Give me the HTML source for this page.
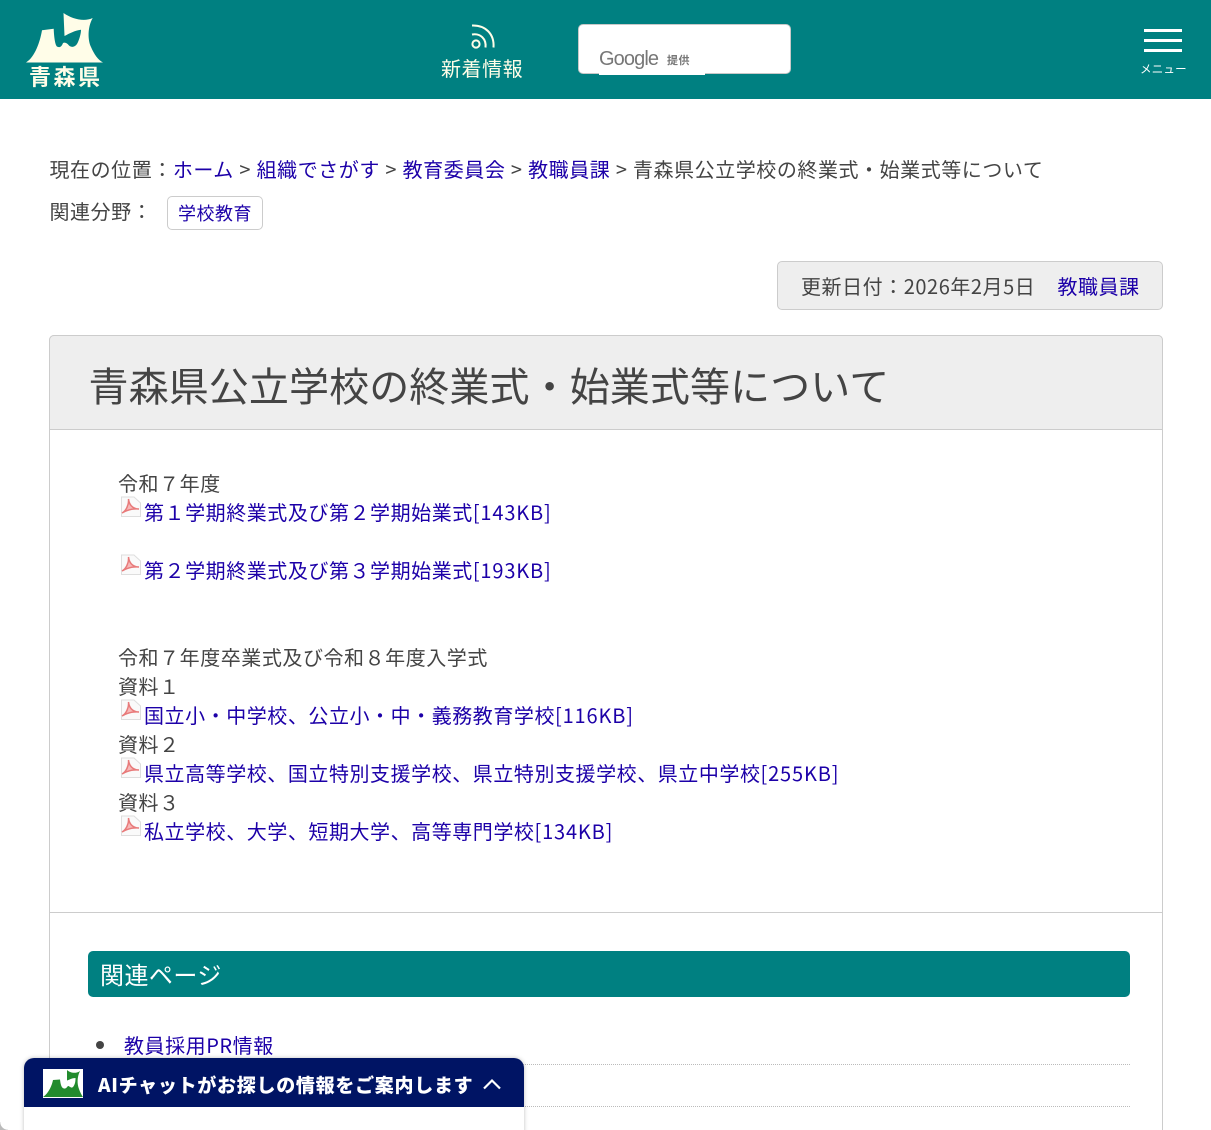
<!DOCTYPE html>
<html lang="ja"><head><meta charset="utf-8"><title>青森県公立学校の終業式・始業式等について</title>
<style>
html,body{margin:0;padding:0;background:#fff;width:1211px;height:1130px;overflow:hidden}
#w{width:1211px;height:1130px;position:relative;overflow:hidden;font-family:"Noto Sans CJK JP",sans-serif;color:#444}
.t{position:absolute;white-space:nowrap;font-size:20px;letter-spacing:.55px;line-height:30px;height:30px}
.k{letter-spacing:.85px}
a{color:#1c00a8;text-decoration:none}
.b{position:absolute;box-sizing:border-box}
svg{position:absolute;display:block}
</style></head><body><div id="w">
<div class="b" style="left:0;top:0;width:1211px;height:99px;background:#008081"></div>
<svg style="left:0;top:0" width="120" height="66" viewBox="0 0 120 66"><path fill="#fffde8" d="M26 62.5C35 57 40 42 42 30.300L53.700 28.700C54 36 55 46 57.500 46.800C60 48 62 46 63 43C65 42 67 43 69 45.500C72 48 76 47 78 42C80 37 81 33 81 29.700C75 30.500 70 33 64.500 36L63.500 13C72 19 84 22 92.700 18C87 28 88 41 91 47C94 54 98 60 103 62.500Z"/></svg>
<div class="t" style="left:29px;top:61px;font-size:22px;letter-spacing:2.500px;font-weight:700;color:#fffde8">青森県</div>
<svg style="left:468px;top:22px" width="30" height="30" viewBox="0 0 30 30" fill="none" stroke="#fffde8" stroke-width="2"><circle cx="8" cy="22" r="3.6"/><path d="M4 12.5C12.5 11 18.5 17 17.5 25.5"/><path d="M4 3.5C17.5 3 26.5 12 25.5 25.5"/></svg>
<div class="t" style="left:441px;top:53px;color:#fffde8">新着情報</div>
<div class="b" style="left:578px;top:24px;width:213px;height:50px;background:#fff;border:1px solid #c8c8c8;border-radius:5px"></div>
<div class="b" style="left:599px;top:70px;width:106px;height:5px;background:#fff"></div>
<div class="t" style="left:599px;top:44px;font-family:'Liberation Sans',sans-serif;font-size:20px;letter-spacing:-.9px;color:#777">Google</div>
<div class="t" style="left:667px;top:45px;font-size:11px;letter-spacing:.5px;font-weight:700;color:#777">提供</div>
<div class="b" style="left:1144px;top:29px;width:38px;height:3px;background:#fff"></div>
<div class="b" style="left:1144px;top:39px;width:38px;height:3px;background:#fff"></div>
<div class="b" style="left:1144px;top:49px;width:38px;height:3px;background:#fff"></div>
<div class="t" style="left:1140px;top:54px;font-size:11.5px;letter-spacing:.2px;color:#fff">メニュー</div>

<div class="t" style="left:49.500px;top:154px;word-spacing:.5px">現在の位置：<a>ホーム</a> &gt; <a>組織でさがす</a> &gt; <a>教育委員会</a> &gt; <a>教職員課</a> &gt; 青森県公立学校の終業式・始業式等について</div>
<div class="t" style="left:49.500px;top:196px">関連分野：</div>
<div class="b" style="left:167px;top:196px;width:96px;height:34px;border:1px solid #ccc;border-radius:5px"></div>
<div class="t" style="left:178px;top:198px;font-size:18px;letter-spacing:.5px"><a>学校教育</a></div>

<div class="b" style="left:777px;top:261px;width:386px;height:49px;background:#eee;border:1px solid #ccc;border-radius:5px"></div>
<div class="t" style="left:801px;top:271px">更新日付：2026年2月5日</div>
<div class="t" style="left:1057.500px;top:271px"><a>教職員課</a></div>

<div class="b" style="left:49px;top:335px;width:1114px;height:830px;border:1px solid #ccc;border-radius:5px 5px 0 0"></div>
<div class="b" style="left:49px;top:335px;width:1114px;height:95px;background:#eee;border:1px solid #ccc;border-radius:5px 5px 0 0"></div>
<div class="t" style="left:88.500px;top:354px;height:60px;line-height:60px;font-size:40px;letter-spacing:.1px">青森県公立学校の終業式・始業式等について</div>

<div class="t" style="left:118px;top:468px">令和７年度</div>
<div class="t" style="left:144px;top:497px"><a>第１学期終業式及び第２学期始業式<span class="k">[143KB]</span></a></div>
<div class="t" style="left:144px;top:555px"><a>第２学期終業式及び第３学期始業式<span class="k">[193KB]</span></a></div>
<div class="t" style="left:118px;top:642px">令和７年度卒業式及び令和８年度入学式</div>
<div class="t" style="left:118px;top:671px">資料１</div>
<div class="t" style="left:144px;top:700px"><a>国立小・中学校、公立小・中・義務教育学校<span class="k">[116KB]</span></a></div>
<div class="t" style="left:118px;top:729px">資料２</div>
<div class="t" style="left:144px;top:758px"><a>県立高等学校、国立特別支援学校、県立特別支援学校、県立中学校<span class="k">[255KB]</span></a></div>
<div class="t" style="left:118px;top:787px">資料３</div>
<div class="t" style="left:144px;top:816px"><a>私立学校、大学、短期大学、高等専門学校<span class="k">[134KB]</span></a></div>

<svg style="left:120px;top:496px" width="22" height="22" viewBox="0 0 22 22"><path d="M1.5 1H14L20.5 7V20.5H1.5Z" fill="#fafafa" stroke="#dedede"/><path d="M2 17C6 15 9 9 8.500 3C9 8 12 13 19 13C13 12.500 7 14 2 17Z" fill="#f7b8b8" stroke="#e87a7a" stroke-width="1.500"/></svg>
<svg style="left:120px;top:554px" width="22" height="22" viewBox="0 0 22 22"><path d="M1.5 1H14L20.5 7V20.5H1.5Z" fill="#fafafa" stroke="#dedede"/><path d="M2 17C6 15 9 9 8.500 3C9 8 12 13 19 13C13 12.500 7 14 2 17Z" fill="#f7b8b8" stroke="#e87a7a" stroke-width="1.500"/></svg>
<svg style="left:120px;top:699px" width="22" height="22" viewBox="0 0 22 22"><path d="M1.5 1H14L20.5 7V20.5H1.5Z" fill="#fafafa" stroke="#dedede"/><path d="M2 17C6 15 9 9 8.500 3C9 8 12 13 19 13C13 12.500 7 14 2 17Z" fill="#f7b8b8" stroke="#e87a7a" stroke-width="1.500"/></svg>
<svg style="left:120px;top:757px" width="22" height="22" viewBox="0 0 22 22"><path d="M1.5 1H14L20.5 7V20.5H1.5Z" fill="#fafafa" stroke="#dedede"/><path d="M2 17C6 15 9 9 8.500 3C9 8 12 13 19 13C13 12.500 7 14 2 17Z" fill="#f7b8b8" stroke="#e87a7a" stroke-width="1.500"/></svg>
<svg style="left:120px;top:815px" width="22" height="22" viewBox="0 0 22 22"><path d="M1.5 1H14L20.5 7V20.5H1.5Z" fill="#fafafa" stroke="#dedede"/><path d="M2 17C6 15 9 9 8.500 3C9 8 12 13 19 13C13 12.500 7 14 2 17Z" fill="#f7b8b8" stroke="#e87a7a" stroke-width="1.500"/></svg>

<div class="b" style="left:50px;top:912px;width:1112px;height:1px;background:#ccc"></div>
<div class="b" style="left:88px;top:951px;width:1042px;height:46px;background:#008081;border-radius:5px"></div>
<div class="t" style="left:100px;top:959px;font-size:24px;letter-spacing:.45px;color:#fff">関連ページ</div>
<div class="b" style="left:96px;top:1041px;width:8px;height:8px;background:#444;border-radius:50%"></div>
<div class="t" style="left:124px;top:1030px"><a>教員採用PR情報</a></div>
<div class="b" style="left:88px;top:1064px;width:1042px;border-top:1px dotted #bbb"></div>
<div class="b" style="left:88px;top:1106px;width:1042px;border-top:1px dotted #bbb"></div>

<div class="b" style="left:24px;top:1058px;width:500px;height:80px;background:#fff;border-radius:10px 10px 0 0;box-shadow:0 0 4px rgba(0,0,0,.25)"></div>
<div class="b" style="left:24px;top:1058px;width:500px;height:49px;background:#001464;border-radius:10px 10px 0 0"></div>
<svg style="left:43px;top:1069px" width="40" height="29" viewBox="0 0 40 29"><rect width="40" height="29" fill="#fff"/><path fill="#228b2d" d="M0 28C6 24 9 16 10 11L17 10.500C17.500 14 18 19 21 19.500C23 20 24 18 25 17C26 17 27 18 28 18.500C30 19 31 17 32 14C32.500 12 32.500 10 32.500 9C29 9 27 10.500 24 11.500L24 1C27 4 33 5 37 2C34 8 34 15 36 20C37 23 38.500 26 40 28Z"/></svg>
<div class="t" style="left:98px;top:1070px;font-size:19px;letter-spacing:.72px;font-weight:900;color:#fff">AIチャットがお探しの情報をご案内します</div>
<svg style="left:482px;top:1076px" width="20" height="16" viewBox="0 0 20 16" fill="none" stroke="#fff" stroke-width="2.200"><path d="M2 12.500L10 4.500L18 12.500"/></svg>
<div class="b" style="left:0;top:1122px;width:8px;height:8px;background:radial-gradient(circle at 100% 0,transparent 7.500px,#bbb 8px)"></div>
</div></body></html>
